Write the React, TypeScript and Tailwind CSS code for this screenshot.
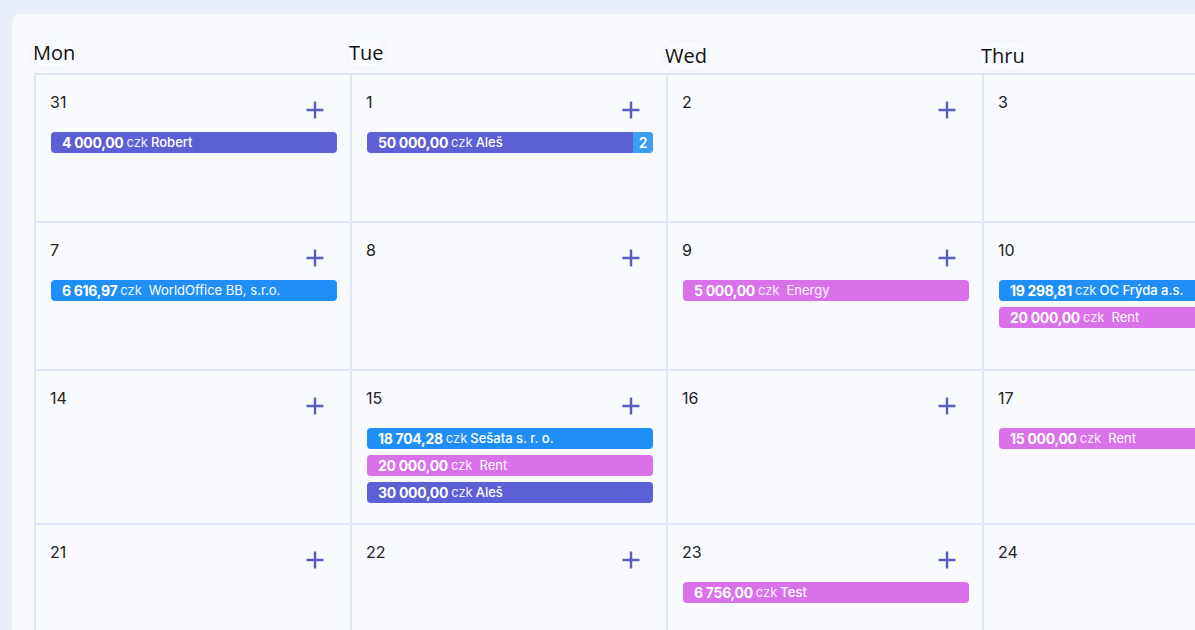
import React from "react";

type Ev = { amount: string; name: string; kind: "indigo" | "blue" | "pink"; badge?: string; spaced?: boolean };
type Cell = { day: string; plus: boolean; events: Ev[] };

const kindClass: Record<Ev["kind"], string> = {
  indigo: "bg-[#5d5fd6]",
  blue: "bg-[#1f8ff7]",
  pink: "bg-[#da70ea]",
};

const rows: Cell[][] = [
  [
    { day: "31", plus: true, events: [{ amount: "4 000,00", name: "Robert", kind: "indigo" }] },
    { day: "1", plus: true, events: [{ amount: "50 000,00", name: "Aleš", kind: "indigo", badge: "2" }] },
    { day: "2", plus: true, events: [] },
    { day: "3", plus: false, events: [] },
  ],
  [
    { day: "7", plus: true, events: [{ amount: "6 616,97", name: "WorldOffice BB, s.r.o.", kind: "blue", spaced: true }] },
    { day: "8", plus: true, events: [] },
    { day: "9", plus: true, events: [{ amount: "5 000,00", name: "Energy", kind: "pink", spaced: true }] },
    {
      day: "10",
      plus: false,
      events: [
        { amount: "19 298,81", name: "OC Frýda a.s.", kind: "blue" },
        { amount: "20 000,00", name: "Rent", kind: "pink", spaced: true },
      ],
    },
  ],
  [
    { day: "14", plus: true, events: [] },
    {
      day: "15",
      plus: true,
      events: [
        { amount: "18 704,28", name: "Sešata s. r. o.", kind: "blue" },
        { amount: "20 000,00", name: "Rent", kind: "pink", spaced: true },
        { amount: "30 000,00", name: "Aleš", kind: "indigo" },
      ],
    },
    { day: "16", plus: true, events: [] },
    { day: "17", plus: false, events: [{ amount: "15 000,00", name: "Rent", kind: "pink", spaced: true }] },
  ],
  [
    { day: "21", plus: true, events: [] },
    { day: "22", plus: true, events: [] },
    { day: "23", plus: true, events: [{ amount: "6 756,00", name: "Test", kind: "pink" }] },
    { day: "24", plus: false, events: [] },
  ],
];

const headers = [
  { label: "Mon", low: false },
  { label: "Tue", low: false },
  { label: "Wed", low: true },
  { label: "Thru", low: true },
];

function Plus() {
  return (
    <svg width="20" height="20" viewBox="0 0 20 20" className="shrink-0">
      <path d="M10 1.5V18.5M1.5 10H18.5" stroke="#5a5cc4" strokeWidth="2.4" strokeLinecap="butt" />
    </svg>
  );
}

function EventBar({ ev }: { ev: Ev }) {
  return (
    <div className={`relative flex h-[21px] items-center overflow-hidden rounded-[4px] pl-[11px] text-white ${kindClass[ev.kind]}`}>
      <span className="whitespace-nowrap text-[14px] font-bold tracking-[-0.3px]">{ev.amount}</span>
      <span className="ml-[3px] whitespace-nowrap text-[13px] font-normal text-white/90">czk</span>
      <span className={`whitespace-nowrap text-[13px] ${ev.spaced ? "ml-[7px] font-normal" : "ml-[3px] font-medium"}`}>{ev.name}</span>
      {ev.badge && (
        <span className="absolute right-0 top-0 flex h-full w-[20px] items-center justify-center rounded-r-[4px] bg-[#3c9ef2] text-[14px] font-semibold">
          {ev.badge}
        </span>
      )}
    </div>
  );
}

function DayCell({ cell }: { cell: Cell }) {
  return (
    <div className="min-h-[146px] bg-[#f8fafe] pb-[20px] pl-[14px] pr-[13px] pt-[15px]">
      <div className="flex h-[42px] items-start justify-between pr-[12px]">
        <span className="text-[16px] leading-[24px] text-[#222]">{cell.day}</span>
        {cell.plus && (
          <span className="mt-[10px]">
            <Plus />
          </span>
        )}
      </div>
      <div className="flex flex-col gap-[6px] pl-[1px]">
        {cell.events.map((ev, i) => (
          <EventBar key={i} ev={ev} />
        ))}
      </div>
    </div>
  );
}

export default function App() {
  return (
    <div className="h-[630px] w-[1195px] overflow-hidden bg-[#e9effb] pl-[12px] pt-[14px]" style={{ fontFamily: "Inter, 'Noto Sans', sans-serif" }}>
      <div className="w-[1300px] rounded-tl-[8px] bg-[#f8fafe] pl-[22px] pt-[25px]">
        <div className="grid w-[1264px] grid-cols-[repeat(4,316px)] pb-[6px]">
          {headers.map((h) => (
            <div key={h.label} className="-ml-[1px]">
              <span
                className={`inline-block rounded-[10px] bg-[#f9fbff] text-[20px] leading-[28px] text-[#111] shadow-[0_0_8px_rgba(170,185,215,0.12)] ${h.low ? "translate-y-[3px]" : ""}`}
                style={{ fontFamily: "'Open Sans', 'Noto Sans', sans-serif" }}
              >
                {h.label}
              </span>
            </div>
          ))}
        </div>
        <div className="grid w-[1266px] grid-cols-[repeat(4,314px)] gap-[2px] bg-[#e0e7f6] p-[2px] pr-0">
          {rows.flat().map((c, i) => (
            <DayCell key={i} cell={c} />
          ))}
        </div>
      </div>
    </div>
  );
}
